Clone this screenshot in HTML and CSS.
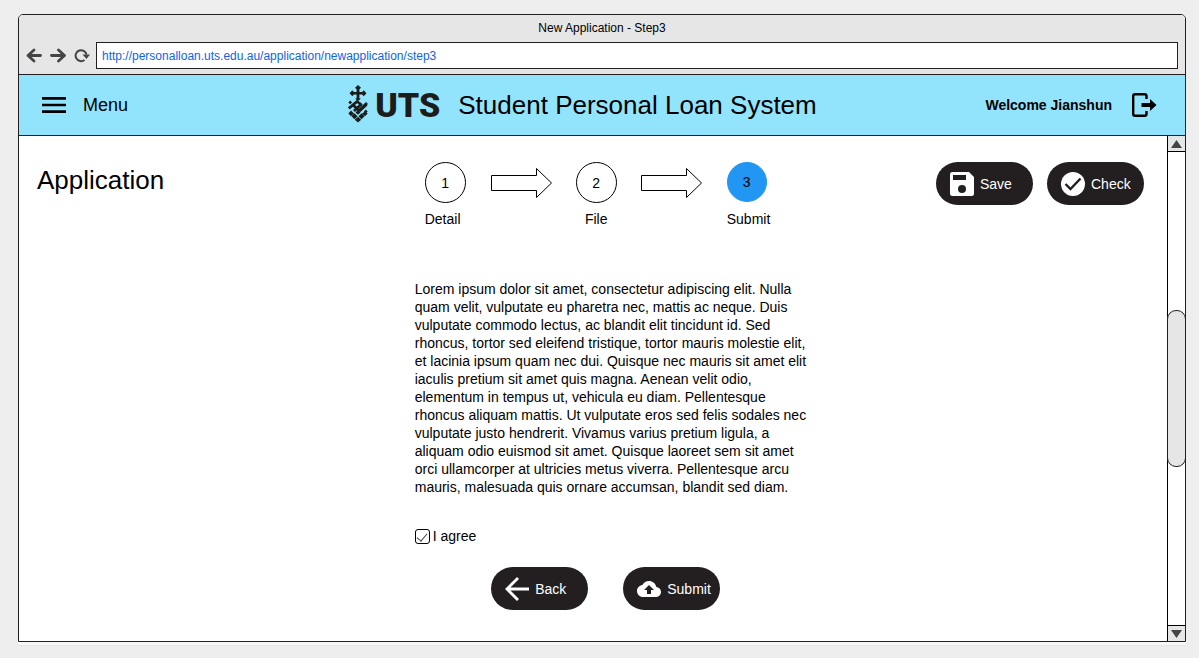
FILE: index.html
```html
<!DOCTYPE html>
<html lang="en">
<head>
<meta charset="utf-8">
<title>New Application - Step3</title>
<link rel="stylesheet" href="styles.css">
</head>
<body>
<div class="window">
  <div class="chrome">
    <div class="chrome-title">New Application - Step3</div>
    <div class="toolbar">
      <div class="toolbar-buttons">
        <button class="nav-button" type="button" aria-label="Go back"><svg width="16" height="16" viewBox="0 0 16 16"><path d="M14.500 7.500H3M8 2L2 7.500 8 13" fill="none" stroke="#444" stroke-width="2.800" stroke-linecap="round" stroke-linejoin="round"/></svg></button>
        <button class="nav-button" type="button" aria-label="Go forward"><svg width="16" height="16" viewBox="0 0 16 16"><path d="M1.500 7.500h12M8.500 2l6 5.500-6 5.500" fill="none" stroke="#444" stroke-width="2.800" stroke-linecap="round" stroke-linejoin="round"/></svg></button>
        <button class="nav-button" type="button" aria-label="Reload"><svg width="16" height="16" viewBox="0 0 16 16"><path d="M10.500 12A5.500 5.500 0 1 1 12.500 6.500" fill="none" stroke="#444" stroke-width="2"/><path d="M8.500 6.500H16L12.500 11z" fill="#444"/></svg></button>
      </div>
      <input class="address" type="text" aria-label="Address" value="http://personalloan.uts.edu.au/application/newapplication/step3">
    </div>
  </div>

  <header class="header">
    <button class="menu" type="button">
      <svg width="24" height="16" viewBox="0 0 24 16"><path d="M0 0h24v2.700H0zM0 6.700h24v2.600H0zM0 13.300h24V16H0z"/></svg>
      <span>Menu</span>
    </button>
    <div class="brand">
      <svg width="20" height="38" viewBox="0 0 20 38" fill="#1c1c1a">
        <path d="M10 0l3 2.800-3 2.800-3-2.800zM4.300 5.200L7 8.200l-2.700 3-2.800-3zM15.700 5.200l2.800 3-2.800 3-2.700-3zM4 7h12v2.600H4zM8.600 4h2.800v10.500H8.600z"/>
        <path d="M7 13.500h6l-3 2.500zM2.200 15.500l1.900 1.900-1.900 1.900-1.900-1.900zM17.800 24.500l1.900 1.900-1.900 1.900-1.900-1.900z"/>
        <g fill="none" stroke="#1c1c1a" stroke-width="2.800" stroke-linejoin="round">
          <path d="M.8 23.500L9 16.500l4 3-7 6.500"/>
          <path d="M4.500 19.500l6.500 6 8-7.500M11.500 26l7-6.500"/>
        </g>
        <path d="M3 25.500l3 3-3 2.800-2.700-2.800zM17 26.500l2.700 2-2.700 2.800-3-2.800zM6.500 28.300l3 3-3 2.900-3-2.900zM13.500 28.300l3 3-3 2.900-3-2.900zM10 31.800l3.200 2.900-3.200 2.900-3.200-2.900zM10 25l2.500 2.400-2.500 2.400-2.500-2.400z"/>
      </svg>
      <span class="brand-mark">UTS</span>
      <span class="brand-title">Student Personal Loan System</span>
    </div>
    <div class="account">
      <strong>Welcome Jianshun</strong>
      <button class="logout" type="button" aria-label="Log out"><svg width="25" height="24" viewBox="0 0 25 24"><path d="M14.500 6V3q0-1.800-1.800-1.800H3Q1.200 1.200 1.200 3v18q0 1.800 1.800 1.800h9.700q1.800 0 1.800-1.800v-3" fill="none" stroke="#000" stroke-width="2.400"/><path d="M9.500 10H18V6l6.500 6-6.500 6v-4H9.500z"/></svg></button>
    </div>
  </header>

  <div class="viewport">
    <main class="page">
      <h1 class="page-title">Application</h1>
      <ol class="steps">
        <li class="step"><span class="step-number">1</span><span>Detail</span></li>
        <li class="step-arrow" aria-hidden="true"><svg width="62" height="32" viewBox="0 0 62 32"><path d="M1.500 9.500h45V2.500L61.500 17l-15 14.500v-7h-45z" fill="#fff" stroke="#000"/></svg></li>
        <li class="step step-centered"><span class="step-number">2</span><span>File</span></li>
        <li class="step-arrow" aria-hidden="true"><svg width="62" height="32" viewBox="0 0 62 32"><path d="M.5 9.500h45V2.500L60.500 17l-15 14.500v-7H.5z" fill="#fff" stroke="#000"/></svg></li>
        <li class="step" aria-current="step"><span class="step-number step-current">3</span><span>Submit</span></li>
      </ol>
      <div class="actions">
        <button class="pill" type="button"><svg width="24" height="24" viewBox="0 0 24 24"><path fill="#fff" fill-rule="evenodd" d="M2.500 0H19l5 5v16.500q0 2.500-2.500 2.500h-19Q0 24 0 21.500v-19Q0 0 2.500 0zM3 3v5h13V3zM12 13a4 4 0 1 0 0 8 4 4 0 1 0 0-8z"/></svg><span>Save</span></button>
        <button class="pill" type="button"><svg width="24" height="24" viewBox="0 0 24 24"><circle cx="12" cy="12" r="12" fill="#fff"/><path d="M4.500 12l5 5L19.500 6.500" fill="none" stroke="#231f20" stroke-width="2.400"/></svg><span>Check</span></button>
      </div>
      <form class="terms">
        <p class="terms-text">Lorem ipsum dolor sit amet, consectetur adipiscing elit. Nulla quam velit, vulputate eu pharetra nec, mattis ac neque. Duis vulputate commodo lectus, ac blandit elit tincidunt id. Sed rhoncus, tortor sed eleifend tristique, tortor mauris molestie elit, et lacinia ipsum quam nec dui. Quisque nec mauris sit amet elit iaculis pretium sit amet quis magna. Aenean velit odio, elementum in tempus ut, vehicula eu diam. Pellentesque rhoncus aliquam mattis. Ut vulputate eros sed felis sodales nec vulputate justo hendrerit. Vivamus varius pretium ligula, a aliquam odio euismod sit amet. Quisque laoreet sem sit amet orci ullamcorper at ultricies metus viverra. Pellentesque arcu mauris, malesuada quis ornare accumsan, blandit sed diam.</p>
        <label class="agree"><input class="agree-box" type="checkbox" checked><span>I agree</span></label>
        <div class="form-buttons">
          <button class="pill" type="button"><svg width="24" height="24" viewBox="0 0 24 24"><path d="M24 12H2M13 1L2 12l11 11" fill="none" stroke="#fff" stroke-width="2.800"/></svg><span>Back</span></button>
          <button class="pill" type="submit"><svg width="24" height="24" viewBox="0 0 24 24"><path fill="#fff" d="M19.350 10.040C18.670 6.590 15.640 4 12 4 9.110 4 6.600 5.640 5.350 8.040 2.340 8.360 0 10.910 0 14c0 3.310 2.690 6 6 6h13c2.760 0 5-2.240 5-5 0-2.640-2.050-4.780-4.650-4.960z"/><path fill="#231f20" d="M14 13v4h-4v-4H7l5-5 5 5z"/></svg><span>Submit</span></button>
        </div>
      </form>
    </main>
    <div class="scrollbar">
      <button class="scroll-button" type="button" aria-label="Scroll up"><svg width="11" height="8" viewBox="0 0 11 8"><path d="M5.500 0L11 8H0z" fill="#444"/></svg></button>
      <div class="scroll-track"><div class="scroll-thumb"></div></div>
      <button class="scroll-button scroll-down" type="button" aria-label="Scroll down"><svg width="11" height="8" viewBox="0 0 11 8"><path d="M0 0h11L5.500 8z" fill="#444"/></svg></button>
    </div>
  </div>
</div>
</body>
</html>
```
FILE: styles.css
```css
* { box-sizing: border-box; }

body {
  margin: 0;
  min-height: 100vh;
  padding: 14px 13px 16px 18px;
  display: flex;
  background: #eee;
  color: #000;
  font: 14px/18px "Liberation Sans", Arial, sans-serif;
}

button {
  margin: 0;
  padding: 0;
  border: 0;
  background: none;
  color: inherit;
  font: inherit;
  cursor: pointer;
}

svg { display: block; flex: none; }

.window {
  flex: 1;
  display: flex;
  flex-direction: column;
  border: 1px solid #231f20;
  border-radius: 5px 5px 0 0;
  background: #fff;
  overflow: hidden;
  box-shadow: 0 3px 0 #f7f7f7, 0 4px 1px #e4e4e4;
}

.chrome {
  padding: 4px 7px 5px;
  border-bottom: 1px solid #231f20;
  background: #e6e6e6;
}

.chrome-title {
  padding-bottom: 5px;
  font-size: 12px;
  text-align: center;
}

.toolbar {
  display: flex;
  align-items: center;
  gap: 6px;
}

.toolbar-buttons {
  display: flex;
  gap: 8px;
}

.address {
  flex: 1;
  min-width: 0;
  height: 27px;
  padding: 0 5px;
  border: 1px solid #231f20;
  border-radius: 0;
  background: #fff;
  color: #1064e0;
  font: inherit;
  font-size: 12px;
}

.header {
  display: grid;
  grid-template-columns: 9fr auto 10fr;
  align-items: center;
  min-height: 61px;
  padding: 0 28px 0 23px;
  border-bottom: 1px solid #231f20;
  background: #92e4fc;
}

.menu {
  justify-self: start;
  display: flex;
  align-items: center;
  gap: 17px;
  font-size: 18px;
}

.brand {
  display: flex;
  align-items: center;
}

.brand svg { margin-bottom: 2px; }

.brand-mark {
  padding: 0 18px 0 7px;
  color: #1c1c1a;
  font: 900 34px/40px Roboto, sans-serif;
}

.brand-title {
  font-size: 26px;
  line-height: 32px;
  white-space: nowrap;
}

.account {
  justify-self: end;
  display: flex;
  align-items: center;
  gap: 20px;
}

.viewport {
  flex: 1;
  display: flex;
}

.page {
  flex: 1;
  display: grid;
  grid-template-columns: 17fr 396px 15fr;
  grid-template-rows: auto 1fr;
  align-items: start;
  padding: 26px 23px 31px 18px;
}

.page-title {
  margin: 2px 0 0;
  font-size: 26px;
  font-weight: 400;
  line-height: 32px;
}

.steps {
  display: flex;
  gap: 24px;
  margin: 0;
  padding: 0 10px;
  list-style: none;
}

.step {
  width: 41px;
  display: flex;
  flex-direction: column;
  justify-content: space-between;
  gap: 7px;
  white-space: nowrap;
}

.step-centered { align-items: center; }

.step-number {
  width: 41px;
  height: 41px;
  display: grid;
  place-items: center;
  border: 1px solid #000;
  border-radius: 50%;
}

.step-current {
  width: 40px;
  height: 40px;
  border-color: #2196f3;
  background: #2196f3;
}

.step-arrow { padding-top: 4px; }

.actions {
  justify-self: end;
  display: flex;
  gap: 14px;
}

.pill {
  width: 97px;
  height: 43px;
  display: flex;
  align-items: center;
  gap: 6px;
  padding-left: 14px;
  border-radius: 22px;
  background: #231f20;
  color: #fff;
}

.terms {
  grid-column: 2;
  padding-top: 52px;
}

.terms-text { margin: 0; }

.agree {
  width: fit-content;
  display: flex;
  align-items: center;
  gap: 3px;
  margin-top: 31px;
}

.agree-box {
  appearance: none;
  width: 15px;
  height: 15px;
  margin: 0;
  display: grid;
  place-items: center;
  border: 1px solid #000;
  border-radius: 3px;
  background: #fff;
}

.agree-box:checked::before {
  content: "";
  width: 5px;
  height: 9px;
  border: solid #444;
  border-width: 0 1px 1px 0;
  transform: rotate(40deg);
}

.form-buttons {
  display: flex;
  justify-content: center;
  gap: 35px;
  margin-top: 22px;
  padding-right: 14px;
}

.scrollbar {
  width: 18px;
  display: flex;
  flex-direction: column;
  border-left: 1px solid #000;
}

.scroll-button {
  height: 16px;
  display: grid;
  place-items: center;
  border-bottom: 1px solid #000;
  background: #e6e6e6;
}

.scroll-down {
  border-top: 1px solid #000;
  border-bottom: 0;
}

.scroll-track {
  flex: 1;
  display: grid;
  grid-template-rows: 158fr 157fr 158fr;
}

.scroll-thumb {
  grid-row: 2;
  margin: 0 -1px;
  border: 1px solid #231f20;
  border-radius: 9px;
  background: #e6e6e6;
}
```
